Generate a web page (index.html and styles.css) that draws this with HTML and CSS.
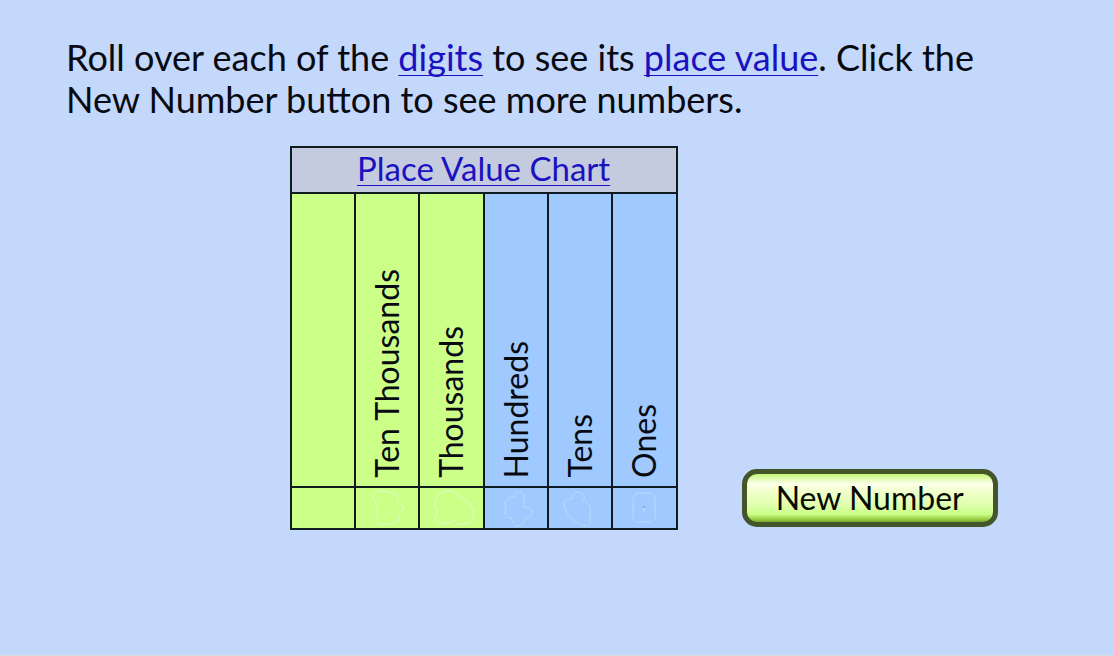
FILE: index.html
```html
<!DOCTYPE html>
<html lang="en">
<head>
<meta charset="utf-8">
<meta name="viewport" content="width=device-width, initial-scale=1">
<title>Place Value Chart</title>
<link rel="stylesheet" href="styles.css">
</head>
<body>
<main class="lesson">
  <p class="instructions">Roll over each of the <a href="#digits">digits</a> to see its <a href="#place-value">place value</a>. Click the<br> New Number button to see more numbers.</p>
  <div class="activity">
    <table class="chart">
      <thead>
        <tr><th class="chart-title" colspan="6"><a href="#chart">Place Value Chart</a></th></tr>
        <tr class="places">
          <th class="thousands"></th>
          <th class="thousands" scope="col"><span class="place">Ten Thousands</span></th>
          <th class="thousands" scope="col"><span class="place">Thousands</span></th>
          <th class="units" scope="col"><span class="place">Hundreds</span></th>
          <th class="units" scope="col"><span class="place">Tens</span></th>
          <th class="units" scope="col"><span class="place">Ones</span></th>
        </tr>
      </thead>
      <tbody>
        <tr class="digits" id="digits">
          <td class="thousands"></td>
          <td class="thousands"><svg class="outline" viewBox="0 0 62 40" aria-hidden="true"><path d="M17 10C16 3 22 2 27 3C33 5 38 4 40 7C43 10 40 13 42 15C48 16 49 21 45 23C42 26 44 29 42 32C39 37 34 36 29 36C24 37 18 35 20 30C22 27 21 23 21 19C22 14 18 14 17 10ZM31 24Q33 23 34 25"/></svg></td>
          <td class="thousands"><svg class="outline" viewBox="0 0 62 40" aria-hidden="true"><path d="M17 8C19 3 24 5 26 3C31 2 34 3 36 6C39 8 40 10 43 11C49 14 54 20 53 28C53 34 49 36 43 36C38 37 36 35 34 32C31 35 26 35 21 35C15 34 14 30 17 25C18 22 14 20 15 15C16 12 16 10 17 8Z"/></svg></td>
          <td class="units"><svg class="outline" viewBox="0 0 62 40" aria-hidden="true"><path d="M29 9C29 2 39 3 39 9V20C44 18 48 21 47 26C46 29 42 31 39 30C40 34 37 38 33 38C29 38 26 34 27 30C22 31 19 27 20 23C22 20 20 18 20 15C20 11 24 9 29 9Z"/></svg></td>
          <td class="units"><svg class="outline" viewBox="0 0 62 40" aria-hidden="true"><path d="M23 11C22 6 25 4 30 4C35 5 37 9 34 12C39 14 42 19 41 24V33C42 38 37 39 32 37C24 33 16 25 15 17C14 12 19 11 23 11Z"/></svg></td>
          <td class="units"><svg class="outline" viewBox="0 0 62 40" aria-hidden="true"><path d="M23 5H37C40 6 42 9 42 13V27C42 32 40 34 36 34H24C20 33 19 31 20 26V13C19 10 22 9 23 5ZM31 19Q29 22 31 24Q33 22 31 19Z"/><circle class="speck" cx="31" cy="19" r=".7"/></svg></td>
        </tr>
      </tbody>
    </table>
    <button class="new-number" type="button">New Number</button>
  </div>
</main>
</body>
</html>
```
FILE: styles.css
```css
* {
  box-sizing: border-box;
}

body {
  margin: 0;
  min-height: 100vh;
  background: #c3d8fb;
  border-bottom: 1px solid #d8dbe2;
  color: #080a12;
  font-family: Lato, "Liberation Sans", sans-serif;
}

a {
  color: #1a12c0;
  text-decoration: underline;
  text-decoration-thickness: 1px;
  text-decoration-skip-ink: none;
  text-underline-offset: 4px;
}

.lesson {
  padding: 36px 0 24px;
}

.instructions {
  margin: 0 66px 26px;
  font-size: 36px;
  line-height: 42px;
}

.activity {
  display: flex;
  align-items: flex-end;
  gap: 64px;
  padding-left: 26%;
}

.chart {
  width: 388px;
  border-collapse: collapse;
  table-layout: fixed;
}

.chart th,
.chart td {
  padding: 0;
  border: 2px solid #101c20;
  font-weight: 400;
}

.chart .chart-title {
  height: 46px;
  background: #c4cbdf;
  font-size: 33px;
  line-height: 40px;
  padding-bottom: 4px;
}

.places th {
  height: 294px;
  padding-bottom: 8px;
  vertical-align: bottom;
}

.place {
  display: inline-block;
  writing-mode: vertical-rl;
  transform: rotate(180deg);
  font-size: 32px;
  line-height: 36px;
  white-space: nowrap;
  vertical-align: bottom;
}

.digits td {
  height: 42px;
}

.thousands {
  background: #ccff88;
}

.units {
  background: #a0caff;
}

.outline {
  display: block;
  width: 100%;
  height: 40px;
  fill: none;
  stroke: #e6fbd0;
  stroke-width: 1;
}

.units .outline {
  stroke: #b9dcfa;
}

.outline .speck {
  fill: #536984;
  stroke: none;
}

.new-number {
  margin-bottom: 3px;
  padding: 6px 29px;
  border: 5px solid #45552a;
  border-radius: 15px;
  background: linear-gradient(#c6f777 0%, #fbffe8 20%, #f0ffc9 38%, #e0ffad 65%, #c9ff85 84%, #91c23c 96%, #79a530 100%);
  color: #080a04;
  font: 32px/36px Lato, "Liberation Sans", sans-serif;
  white-space: nowrap;
  cursor: pointer;
}
```
